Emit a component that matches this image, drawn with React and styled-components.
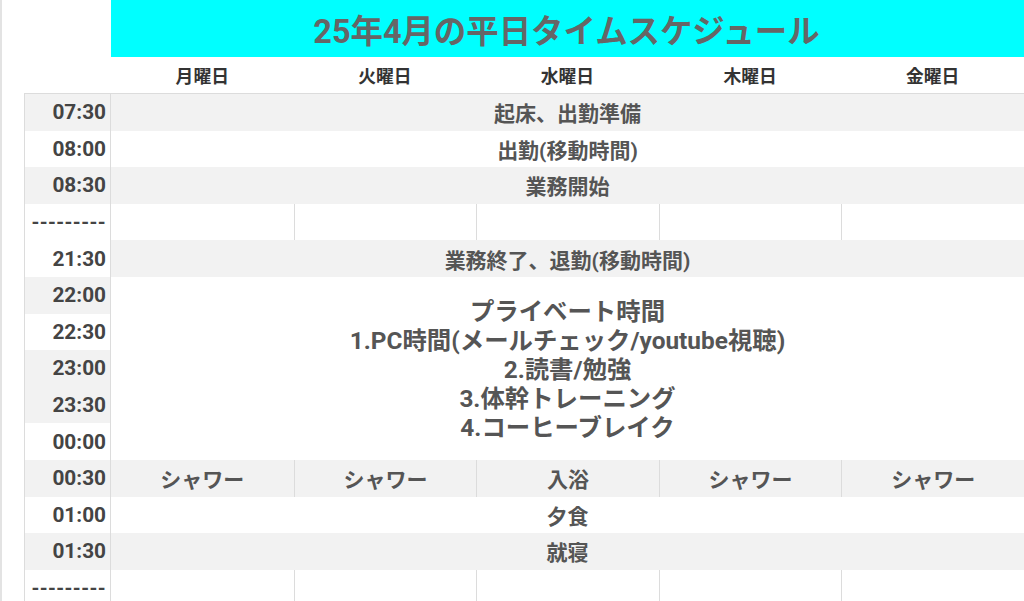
import React from 'react';
import styled, { createGlobalStyle } from 'styled-components';

const GlobalStyle = createGlobalStyle`
  html, body {
    margin: 0;
    padding: 0;
    background: #ffffff;
    overflow: hidden;
  }
  body {
    font-family: Roboto, "Noto Sans CJK JP", sans-serif;
  }
`;

const Page = styled.div`
  min-height: 100vh;
  border-left: 2px solid #e3e3e3;
  padding-left: 22px;
  box-sizing: border-box;
`;

const Grid = styled.div`
  display: grid;
  grid-template-columns: 87px repeat(5, 182.6px);
  width: max-content;
`;

const Title = styled.h1`
  grid-column: 2 / span 5;
  margin: 0;
  height: 57px;
  background: #00ffff;
  color: #666666;
  font-size: 32.4px;
  font-weight: 700;
  display: flex;
  align-items: center;
  justify-content: center;
  padding-right: 2px;
`;

const DayHead = styled.div`
  height: 36px;
  display: flex;
  align-items: center;
  justify-content: center;
  font-size: 17.8px;
  font-weight: 700;
  color: #333333;
`;

const Table = styled.div`
  display: grid;
  grid-template-columns: 86px repeat(5, 182.6px);
  grid-auto-rows: 36.6px;
  width: max-content;
  border-top: 1px solid #dcdcdc;
  border-left: 1px solid #dcdcdc;
`;

const TimeCell = styled.div`
  grid-column: 1;
  background: ${p => (p.shaded ? '#f2f2f2' : '#ffffff')};
  border-right: 1px solid #dcdcdc;
  display: flex;
  align-items: center;
  justify-content: flex-end;
  padding-right: 4px;
  white-space: nowrap;
  font-size: ${p => (p.dash ? '20px' : '20.8px')};
  font-weight: 700;
  color: #444444;
  letter-spacing: ${p => (p.dash ? '0.4px' : '0')};
`;

const Cell = styled.div`
  grid-column: span ${p => p.span || 1};
  grid-row: span ${p => p.rows || 1};
  background: ${p => (p.shaded ? '#f2f2f2' : '#ffffff')};
  border-left: ${p => (p.divider ? '1px solid #dcdcdc' : 'none')};
  display: flex;
  align-items: center;
  justify-content: center;
  text-align: center;
  white-space: nowrap;
  font-size: 21px;
  font-weight: 700;
  color: #555555;
`;

const Private = styled(Cell)`
  flex-direction: column;
  font-size: 24.4px;
  line-height: 29px;
  padding-top: 2px;
`;

const days = ['月曜日', '火曜日', '水曜日', '木曜日', '金曜日'];

const rows = [
  { time: '07:30', tShade: true, shade: true, text: '起床、出勤準備' },
  { time: '08:00', tShade: false, shade: false, text: '出勤(移動時間)' },
  { time: '08:30', tShade: true, shade: true, text: '業務開始' },
  { time: '---------', dash: true, tShade: false, shade: false, split: ['', '', '', '', ''] },
  { time: '21:30', tShade: false, shade: true, text: '業務終了、退勤(移動時間)' },
  { time: '22:00', tShade: true, privateBlock: true },
  { time: '22:30', tShade: false },
  { time: '23:00', tShade: true },
  { time: '23:30', tShade: true },
  { time: '00:00', tShade: false },
  { time: '00:30', tShade: true, shade: true, split: ['シャワー', 'シャワー', '入浴', 'シャワー', 'シャワー'] },
  { time: '01:00', tShade: false, shade: false, text: '夕食' },
  { time: '01:30', tShade: true, shade: true, text: '就寝' },
  { time: '---------', dash: true, tShade: false, shade: false, split: ['', '', '', '', ''] },
];

const privateLines = [
  'プライベート時間',
  '1.PC時間(メールチェック/youtube視聴)',
  '2.読書/勉強',
  '3.体幹トレーニング',
  '4.コーヒーブレイク',
];

const renderBody = (row, i) => {
  if (row.privateBlock) {
    return (
      <Private key={`b${i}`} span={5} rows={5}>
        {privateLines.map(line => (
          <div key={line}>{line}</div>
        ))}
      </Private>
    );
  }
  if (row.split) {
    return row.split.map((t, j) => (
      <Cell key={`b${i}-${j}`} shaded={row.shade} divider={j > 0}>
        {t}
      </Cell>
    ));
  }
  if (row.text) {
    return (
      <Cell key={`b${i}`} span={5} shaded={row.shade}>
        {row.text}
      </Cell>
    );
  }
  return null;
};

export default function App() {
  return (
    <>
      <GlobalStyle />
      <Page>
        <Grid>
          <Title>25年4月の平日タイムスケジュール</Title>
          <div />
          {days.map(d => (
            <DayHead key={d}>{d}</DayHead>
          ))}
        </Grid>
        <Table>
          {rows.map((row, i) => (
            <React.Fragment key={i}>
              <TimeCell shaded={row.tShade} dash={row.dash} style={{ gridRow: i + 1 }}>
                {row.time}
              </TimeCell>
              {renderBody(row, i)}
            </React.Fragment>
          ))}
        </Table>
      </Page>
    </>
  );
}
